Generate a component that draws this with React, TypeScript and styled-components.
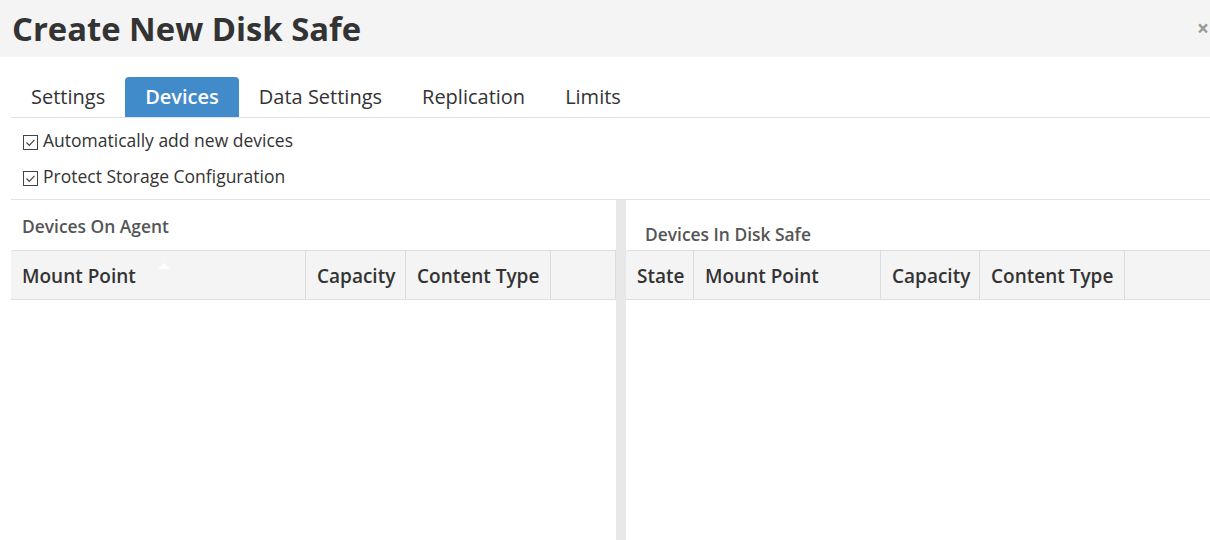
import React from "react";
import styled, { createGlobalStyle } from "styled-components";

const Global = createGlobalStyle`
  html, body {
    margin: 0;
    padding: 0;
    background: #fff;
    font-family: "Open Sans", "Noto Sans", sans-serif;
    color: #333;
    overflow: hidden;
  }
`;

const Page = styled.div`
  width: 1210px;
  height: 540px;
  display: flex;
  flex-direction: column;
  overflow: hidden;
`;

const Header = styled.div`
  height: 57px;
  flex: none;
  background: #f4f4f4;
  display: flex;
  align-items: center;
  justify-content: space-between;
  padding-left: 12px;
  overflow: hidden;
`;

const Title = styled.h1`
  margin: 0;
  font-size: 32.8px;
  font-weight: 700;
  color: #333;
  line-height: 1;
  padding-top: 2px;
`;

const Close = styled.span`
  font-size: 21px;
  font-weight: 700;
  color: #999;
  margin-right: 1px;
  line-height: 1;
`;

const Body = styled.div`
  flex: 1;
  display: flex;
  flex-direction: column;
  padding-left: 11px;
  min-height: 0;
`;

const Tabs = styled.div`
  margin-top: 20px;
  display: flex;
  border-bottom: 1px solid #e2e2e2;
`;

const Tab = styled.div<{ $active?: boolean }>`
  height: 40px;
  padding: 0 20px 1px;
  box-sizing: border-box;
  display: flex;
  align-items: center;
  font-size: 20px;
  font-weight: ${(p) => (p.$active ? 600 : 400)};
  color: ${(p) => (p.$active ? "#fff" : "#333")};
  background: ${(p) => (p.$active ? "#428bca" : "transparent")};
  border-radius: 4px 4px 0 0;
`;

const Options = styled.div`
  padding: 4px 0 5px 12px;
  border-bottom: 1px solid #e2e2e2;
`;

const OptionRow = styled.label`
  height: 36px;
  display: flex;
  align-items: center;
  font-size: 17.5px;
  color: #333;
`;

const Box = styled.span`
  width: 13px;
  height: 13px;
  border: 1px solid #444;
  margin-right: 5px;
  margin-top: 4px;
  display: flex;
  align-items: center;
  justify-content: center;
  background: #fff;
`;

const Panels = styled.div`
  flex: 1;
  display: flex;
  min-height: 0;
`;

const Panel = styled.div<{ $width?: number }>`
  ${(p) => (p.$width ? `width: ${p.$width}px; flex: none;` : "flex: 1;")}
  display: flex;
  flex-direction: column;
`;

const Splitter = styled.div`
  width: 10px;
  flex: none;
  background: #e8e8e8;
`;

const PanelTitle = styled.div<{ $top: number; $left: number }>`
  height: 50px;
  box-sizing: border-box;
  padding-top: ${(p) => p.$top}px;
  padding-left: ${(p) => p.$left}px;
  font-size: 17.4px;
  font-weight: 600;
  color: #555;
`;

const HeadRow = styled.div`
  display: flex;
  height: 50px;
  box-sizing: border-box;
  background: #f4f4f4;
  border-top: 1px solid #dedede;
  border-bottom: 1px solid #dedede;
  border-top-left-radius: 3px;
`;

const HeadCell = styled.div<{ $w?: number; $last?: boolean }>`
  position: relative;
  ${(p) => (p.$w ? `width: ${p.$w}px; flex: none;` : "flex: 1;")}
  box-sizing: border-box;
  padding: 2px 11px 0;
  display: flex;
  align-items: center;
  font-size: 19px;
  font-weight: 600;
  color: #333;
  white-space: nowrap;
  border-right: ${(p) => (p.$last ? "none" : "1px solid #dcdcdc")};
`;

const SortArrow = styled.span`
  position: absolute;
  left: 147px;
  top: 12px;
  width: 0;
  height: 0;
  border-left: 6px solid transparent;
  border-right: 6px solid transparent;
  border-bottom: 6px solid #fff;
`;

const Check = () => (
  <Box>
    <svg width="11" height="9" viewBox="0 0 11 9">
      <path d="M1.5 4.5 L4.3 7.3 L9.5 1.8" fill="none" stroke="#444" strokeWidth="1.2" />
    </svg>
  </Box>
);

const App = () => {
  return (
    <Page>
      <Global />
      <Header>
        <Title>Create New Disk Safe</Title>
        <Close>×</Close>
      </Header>
      <Body>
        <Tabs>
          <Tab>Settings</Tab>
          <Tab $active>Devices</Tab>
          <Tab>Data Settings</Tab>
          <Tab>Replication</Tab>
          <Tab>Limits</Tab>
        </Tabs>
        <Options>
          <OptionRow>
            <Check />
            Automatically add new devices
          </OptionRow>
          <OptionRow>
            <Check />
            Protect Storage Configuration
          </OptionRow>
        </Options>
        <Panels>
          <Panel $width={605}>
            <PanelTitle $top={14} $left={11}>Devices On Agent</PanelTitle>
            <HeadRow>
              <HeadCell $w={295}>
                Mount Point
                <SortArrow />
              </HeadCell>
              <HeadCell $w={100}>Capacity</HeadCell>
              <HeadCell $w={145}>Content Type</HeadCell>
              <HeadCell />
            </HeadRow>
          </Panel>
          <Splitter />
          <Panel>
            <PanelTitle $top={22} $left={19}>Devices In Disk Safe</PanelTitle>
            <HeadRow>
              <HeadCell $w={68}>State</HeadCell>
              <HeadCell $w={187}>Mount Point</HeadCell>
              <HeadCell $w={99}>Capacity</HeadCell>
              <HeadCell $w={145}>Content Type</HeadCell>
              <HeadCell $last />
            </HeadRow>
          </Panel>
        </Panels>
      </Body>
    </Page>
  );
};

export default App;
